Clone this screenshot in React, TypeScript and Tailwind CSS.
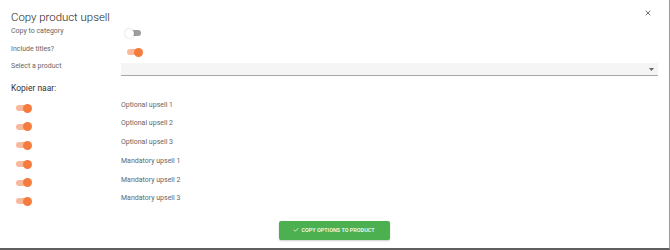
import { Check, X } from "lucide-react";

const TARGETS = [
  "Optional upsell 1",
  "Optional upsell 2",
  "Optional upsell 3",
  "Mandatory upsell 1",
  "Mandatory upsell 2",
  "Mandatory upsell 3",
];

function Toggle({ on }: { on: boolean }) {
  return (
    <div className="relative w-[17px] h-[9px] flex items-center">
      <div
        className={
          on
            ? "ml-[1px] w-[14px] h-[6px] rounded-full bg-[#f9b899]"
            : "ml-[3px] w-[13px] h-[6px] rounded-full bg-[#9e9e9e]"
        }
      />
      <div
        className={
          on
            ? "absolute right-0 top-0 w-[9px] h-[9px] rounded-full bg-[#f57c3d]"
            : "absolute left-0 top-0 w-[9px] h-[9px] rounded-full bg-white shadow-[0_0_2px_rgba(0,0,0,0.25)]"
        }
      />
    </div>
  );
}

export default function App() {
  return (
    <div
      className="w-[670px] h-[250px] bg-white border-r border-r-[#9a9a9a] border-b-2 border-b-[#5f5f5f] flex flex-col relative"
      style={{ fontFamily: "Roboto, 'Liberation Sans', sans-serif" }}
    >
      <button className="absolute right-[17px] top-[9px] text-[#555]">
        <X size={8} strokeWidth={2.5} />
      </button>

      <div className="pl-[11px] pt-[10px] pr-[11px] flex flex-col">
        <h1 className="text-[11.4px] leading-[14px] font-light text-[#222]">Copy product upsell</h1>

        <div className="flex items-start h-[18.4px] mt-[1.7px]">
          <span className="w-[114px] text-[7px] leading-[10px] text-[#666]">Copy to category</span>
          <div className="mt-[3px]">
            <Toggle on={false} />
          </div>
        </div>

        <div className="flex items-start h-[17.4px]">
          <span className="w-[115px] text-[7px] leading-[10px] text-[#666]">Include titles?</span>
          <div className="mt-[3.5px]">
            <Toggle on={true} />
          </div>
        </div>

        <div className="flex items-start h-[14.6px]">
          <span className="w-[110px] text-[7px] leading-[10px] text-[#666]">Select a product</span>
          <div className="flex-1 h-[13px] mt-[1.6px] bg-[#f5f5f5] border-b border-b-[#a8a8a8] flex items-center justify-end pr-[4px]">
            <svg width="5" height="3" viewBox="0 0 5 3">
              <path d="M0 0 L5 0 L2.5 3 Z" fill="#666" />
            </svg>
          </div>
        </div>

        <div className="mt-[6px] text-[8.5px] leading-[12px] text-[#333]">Kopier naar:</div>

        <div className="mt-[5.7px] flex flex-col">
          {TARGETS.map((label) => (
            <div key={label} className="flex items-start h-[18.7px]">
              <div className="w-[110px] pl-[4px] pt-[3.8px]">
                <Toggle on={true} />
              </div>
              <span className="text-[7px] leading-[10px] text-[#666]">{label}</span>
            </div>
          ))}
        </div>
      </div>

      <div className="flex justify-center mt-[8.8px]">
        <button className="ml-[-1px] w-[111px] h-[19px] bg-[#4caf50] rounded-[2px] shadow-[0_1px_2px_rgba(0,0,0,0.2)] flex items-center justify-center gap-[2px] text-white">
          <Check size={6} strokeWidth={3} />
          <span className="text-[5.4px] font-medium tracking-[0.01em]">COPY OPTIONS TO PRODUCT</span>
        </button>
      </div>
    </div>
  );
}
